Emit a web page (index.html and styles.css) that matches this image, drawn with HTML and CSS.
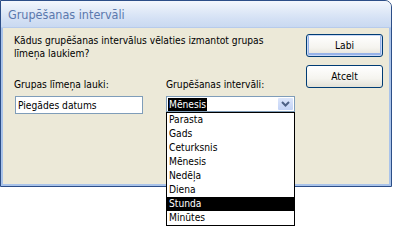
FILE: index.html
```html
<!DOCTYPE html>
<html>
<head>
<meta charset="utf-8">
<link rel="stylesheet" href="styles.css">
</head>
<body>
<div class="window">
  <div class="titlebar"><span class="title">Grupēšanas intervāli</span></div>
  <div class="frame">
    <div class="main">
      <p class="prompt">Kādus grupēšanas intervālus vēlaties izmantot grupas līmeņa laukiem?</p>
      <div class="fields">
        <div class="field field-left">
          <label class="label">Grupas līmeņa lauki:</label>
          <div class="textbox">Piegādes datums</div>
        </div>
        <div class="field field-right">
          <label class="label">Grupēšanas intervāli:</label>
          <div class="combo">
            <span class="combo-value">Mēnesis</span>
            <span class="combo-btn">
              <svg width="9" height="6" viewBox="0 0 9 6"><path d="M1 1 L4.5 4.5 L8 1" fill="none" stroke="#4d6185" stroke-width="2"/></svg>
            </span>
            <ul class="list">
              <li>Parasta</li>
              <li>Gads</li>
              <li>Ceturksnis</li>
              <li>Mēnesis</li>
              <li>Nedēļa</li>
              <li>Diena</li>
              <li class="sel">Stunda</li>
              <li>Minūtes</li>
            </ul>
          </div>
        </div>
      </div>
    </div>
    <div class="buttons">
      <button class="btn btn-default">Labi</button>
      <button class="btn">Atcelt</button>
    </div>
  </div>
</div>
</body>
</html>
```
FILE: styles.css
```css
html, body {
  margin: 0;
  padding: 0;
  background: #ffffff;
}
html {
  height: 228px;
}
body {
  min-height: 228px;
  font-family: "DejaVu Sans Condensed", "DejaVu Sans", "Liberation Sans", sans-serif;
  font-stretch: condensed;
  font-size: 10.2px;
  color: #000;
}
.window {
  width: 392px;
  height: 187px;
  box-sizing: border-box;
  border: 1px solid #2c4e88;
  border-top-right-radius: 7px;
  display: flex;
  flex-direction: column;
  background: #ece9d8;
  position: relative;
}
.titlebar {
  height: 27px;
  flex: none;
  border-top-right-radius: 6px;
  background: linear-gradient(#f3f7fd 0%, #e2ebf8 35%, #d3e0f4 70%, #c9d9f1 100%);
  border-bottom: 1px solid #b7cbeb;
  box-sizing: border-box;
  display: flex;
  align-items: center;
  padding-left: 7px;
  padding-top: 1px;
}
.title {
  font-size: 12.5px;
  color: #5b78ad;
}
.frame {
  flex: 1;
  border: 2px solid #a9c3ea;
  border-top: none;
  display: flex;
  padding: 6px 6px 0 11px;
}
.main {
  flex: 1;
}
.prompt {
  margin: 0;
  width: 275px;
  line-height: 13px;
}
.fields {
  display: flex;
  margin-top: 18px;
}
.field-left {
  width: 152px;
}
.label {
  display: block;
  line-height: 13px;
  margin-bottom: 5px;
}
.textbox {
  width: 128px;
  height: 18px;
  box-sizing: border-box;
  border: 1px solid #7f9db9;
  background: #fff;
  margin-left: 1px;
  padding: 2px 2px;
  line-height: 13px;
}
.combo {
  position: relative;
  width: 129px;
  height: 16px;
  box-sizing: border-box;
  border: 1px solid #7f9db9;
  background: #fff;
  display: flex;
  align-items: center;
  margin-top: 1px;
  z-index: 2;
}
.combo-value {
  background: #000;
  color: #fff;
  line-height: 13px;
  padding: 0 1px;
  margin-left: 1px;
}
.combo-btn {
  margin-left: auto;
  margin-right: 1px;
  width: 15px;
  height: 12px;
  background: linear-gradient(#dce6fb, #c3d3f6);
  border-radius: 1px;
  display: flex;
  align-items: center;
  justify-content: center;
}
.list {
  position: absolute;
  left: -1px;
  top: 15px;
  width: 129px;
  box-sizing: border-box;
  margin: 0;
  padding: 0;
  list-style: none;
  border: 1px solid #000;
  background: #fff;
}
.list li {
  height: 14px;
  line-height: 14px;
  padding-left: 2px;
}
.list li.sel {
  background: #000;
  color: #fff;
}
.buttons {
  display: flex;
  flex-direction: column;
  gap: 8px;
  padding-top: 0;
}
.btn {
  width: 77px;
  height: 23px;
  font: inherit;
  color: #000;
  border: 1px solid #003c74;
  border-radius: 3px;
  background: linear-gradient(#ffffff 0%, #f5f4ef 60%, #e3e1d6 100%);
  padding: 0;
}
.btn-default {
  box-shadow: inset 0 0 0 1px #c9d8f5, inset 0 -1px 0 2px #97b3e8;
}
```
